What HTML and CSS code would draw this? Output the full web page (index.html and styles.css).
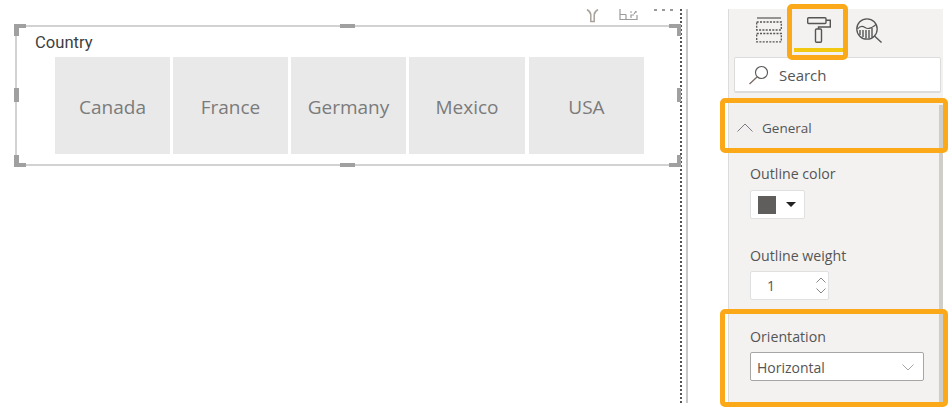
FILE: index.html
```html
<!DOCTYPE html>
<html lang="en">
<head>
<meta charset="utf-8">
<title>Slicer format</title>
<link rel="stylesheet" href="styles.css">
</head>
<body>
<div class="app">
  <main class="canvas">
    <div class="visual-tools">
      <svg class="tool" width="14" height="14" viewBox="0 0 14 14"><path d="M1 0.5 Q5 3 4.8 6 V12.5 H8.2 V6 Q8 3 12 0.5" fill="none" stroke="#a8a29a" stroke-width="1.5"/></svg>
      <svg class="tool tool-focus" width="19" height="14" viewBox="0 0 19 14"><path d="M1 0 V10.5 H18 V6 M1 5.5 H7 M7 5.5 V10 M11 3 H13 M16 3 H18 M12 9 V6 H15 M15 5 L17 2" fill="none" stroke="#9a9a9a" stroke-width="1.2"/></svg>
      <span class="dots"><i></i><i></i><i></i></span>
    </div>
    <section class="visual">
      <span class="handle tl-a"></span><span class="handle tl-b"></span>
      <span class="handle bl-a"></span><span class="handle bl-b"></span>
      <span class="handle tr-a"></span><span class="handle tr-b"></span>
      <span class="handle br-a"></span><span class="handle br-b"></span>
      <span class="handle top"></span><span class="handle bottom"></span>
      <span class="handle left"></span><span class="handle right"></span>
      <h2 class="visual-title">Country</h2>
      <div class="tiles">
        <div class="tile t1">Canada</div>
        <div class="tile t2">France</div>
        <div class="tile t3">Germany</div>
        <div class="tile t4">Mexico</div>
        <div class="tile t5">USA</div>
      </div>
    </section>
  </main>
  <div class="divider"></div>
  <aside class="panel">
    <div class="tabs">
      <svg class="tab-icon" width="26" height="26" viewBox="0 0 26 26"><path d="M1 1 H25" fill="none" stroke="#555" stroke-width="1.2"/><path d="M0.7 5 H25.3 V13 H0.7 Z M0.7 16.5 H25.3 V24.8 H0.7 Z" fill="none" stroke="#555" stroke-width="1.3" stroke-dasharray="2 1.3"/></svg>
      <div class="tab active">
        <svg width="24" height="26" viewBox="0 0 24 26"><path d="M1.7 0.7 H18 Q19 0.7 19 1.7 V5.5 Q19 6.5 18 6.5 H1.7 Q0.7 6.5 0.7 5.5 V1.7 Q0.7 0.7 1.7 0.7 Z M19 3.2 H23.3 V10 H11.5 V12" fill="none" stroke="#555" stroke-width="1.4"/><rect x="8.5" y="12" width="6" height="13.3" rx="1" fill="none" stroke="#555" stroke-width="1.4"/></svg>
      </div>
      <svg class="tab-icon analytics" width="26" height="25" viewBox="0 0 26 25"><circle cx="11" cy="11" r="10.2" fill="none" stroke="#555" stroke-width="1.3"/><path d="M1.5 11 Q5 6.5 9 9.5 T20 6.5" fill="none" stroke="#555" stroke-width="1.2"/><path d="M4 12 V17 M7 12 V19 M10 12 V20.5 M13 12 V20 M16 10 V19" stroke="#555" stroke-width="1.4"/><path d="M18.5 18 L25.5 24.5" stroke="#555" stroke-width="1.4"/></svg>
    </div>
    <div class="search">
      <svg width="21" height="21" viewBox="0 0 21 21"><circle cx="13.5" cy="8.5" r="6" fill="none" stroke="#555" stroke-width="1.1"/><path d="M9 13 L1.5 20" stroke="#7a6a66" stroke-width="1.3"/></svg>
      <span class="search-text">Search</span>
    </div>
    <div class="body">
      <div class="section-head">
        <svg width="16" height="9" viewBox="0 0 16 9"><path d="M0.5 8.5 L8 1 L15.5 8.5" fill="none" stroke="#7d7a86" stroke-width="1"/></svg>
        <span>General</span>
      </div>
      <label class="lbl lbl-color">Outline color</label>
      <div class="color-btn"><span class="swatch"></span><span class="caret"></span></div>
      <label class="lbl lbl-weight">Outline weight</label>
      <div class="spin">
        <span class="spin-val">1</span>
        <span class="arrows">
          <svg width="10" height="6" viewBox="0 0 10 6"><path d="M0.5 5.5 L5 1 L9.5 5.5" fill="none" stroke="#8a8886"/></svg>
          <svg width="10" height="6" viewBox="0 0 10 6"><path d="M0.5 0.5 L5 5 L9.5 0.5" fill="none" stroke="#8a8886"/></svg>
        </span>
      </div>
      <label class="lbl lbl-orient">Orientation</label>
      <div class="select">
        <span>Horizontal</span>
        <svg width="12" height="7" viewBox="0 0 12 7"><path d="M0.5 0.5 L6 6 L11.5 0.5" fill="none" stroke="#a6a6a6"/></svg>
      </div>
    </div>
    <span class="mark mark-tab"></span>
    <span class="underline"></span>
    <span class="mark mark-general"></span>
    <span class="mark mark-orient"></span>
  </aside>
</div>
</body>
</html>
```
FILE: styles.css
```css
* { box-sizing: border-box; }
html, body { margin: 0; padding: 0; background: #fff; overflow: hidden; }
body { font-family: "Open Sans", "Noto Sans", sans-serif; color: #444; }
.app { width: 951px; height: 413px; display: flex; position: relative; }

.canvas { width: 680px; padding: 9px 0 0 15px; flex: none; }
.visual-tools { height: 16px; display: flex; justify-content: flex-end; align-items: flex-start; overflow: hidden; padding-right: 7px; }
.tool { display: block; }
.tool-focus { margin-left: 19px; margin-right: 16px; }
.dots { display: flex; gap: 5px; }
.dots i { width: 3px; height: 2px; background: #9a9a9a; display: block; }

.visual { position: relative; height: 141px; border: 2px solid #d2d2d2; border-right: 0; padding: 7px 0 0 18px; }
.visual-title { margin: 0; font: 400 16.6px/18px Roboto, sans-serif; color: #3f3f3f; }
.tiles { display: flex; margin: 5px 0 0 20px; }
.tile { height: 97px; padding-top: 2px; background: #e9e9e9; display: flex; align-items: center; justify-content: center; font-size: 19px; color: #7b7b7b; width: 115px; margin-right: 3px; }
.t4 { width: 116px; margin-right: 4px; }
.t5 { margin-right: 0; }

.handle { position: absolute; background: #a0a0a0; }
.tl-a { left: -3px; top: -3px; width: 12px; height: 4px; }
.tl-b { left: -3px; top: -3px; width: 5px; height: 12px; }
.bl-a { left: -3px; bottom: -3px; width: 12px; height: 4px; }
.bl-b { left: -3px; bottom: -3px; width: 5px; height: 12px; }
.tr-a { right: -1px; top: -3px; width: 12px; height: 4px; }
.tr-b { right: -1px; top: -3px; width: 4px; height: 12px; }
.br-a { right: -1px; bottom: -3px; width: 12px; height: 4px; }
.br-b { right: -1px; bottom: -3px; width: 4px; height: 12px; }
.top { left: 323px; top: -3px; width: 15px; height: 4px; }
.bottom { left: 323px; bottom: -3px; width: 15px; height: 4px; }
.left { left: -3px; top: 61px; width: 5px; height: 14px; }
.right { right: -1px; top: 61px; width: 4px; height: 14px; }

.divider { width: 8px; flex: none; margin-top: 9px; height: 394px; border-left: 2px dotted #555; border-right: 2px solid #c8c8c8; margin-right: 40px; }

.panel { width: 215px; flex: none; margin-top: 9px; height: 396px; background: #f3f2f1; border-left: 1px solid #dcdcdc; }
.tabs { height: 47px; display: flex; align-items: flex-start; padding-left: 27px; }
.tab-icon { display: block; margin-top: 8px; }
.tab { width: 59px; margin-left: 6px; padding: 8px 0 0 19px; }
.tab svg { display: block; }
.analytics { margin-left: 9px; margin-top: 9px; }
.search { margin: 1px 0 0 5px; width: 207px; height: 36px; background: #fff; border: 1px solid #dcdcdc; border-bottom-width: 2px; border-radius: 2px; display: flex; align-items: center; padding-left: 13px; gap: 10px; font-size: 15px; color: #555; }
.search svg { display: block; }
.search-text { padding-top: 1px; }

.body { margin-top: 12px; height: 300px; border-right: 4px solid #d0cec9; }
.section-head { height: 45px; display: flex; align-items: center; gap: 9px; padding-left: 8px; font-size: 13.5px; color: #555; background: #f1f0ef; }
.section-head svg { display: block; }
.lbl { display: block; font-size: 14.2px; line-height: 18px; color: #555; margin-left: 21px; }
.lbl-color { margin-top: 15px; }
.color-btn { margin: 7px 0 0 21px; width: 55px; height: 29px; background: #fff; border: 1px solid #e0e0e0; border-radius: 2px; display: flex; align-items: center; padding-left: 7px; gap: 10px; }
.swatch { width: 18px; height: 18px; background: #605e5c; display: block; }
.caret { width: 0; height: 0; border: 5px solid transparent; border-top: 5px solid #222; border-bottom: 0; display: block; }
.lbl-weight { margin-top: 28px; }
.spin { margin: 6px 0 0 21px; width: 79px; height: 29px; background: #fff; border: 1px solid #e0e0e0; border-radius: 2px; display: flex; align-items: center; justify-content: space-between; padding: 0 2px 0 16px; font-size: 14px; color: #555; }
.arrows { display: flex; flex-direction: column; gap: 5px; }
.arrows svg { display: block; }
.lbl-orient { margin-top: 28px; }
.select { margin: 6px 0 0 21px; width: 174px; height: 29px; background: #fff; border: 1px solid #a8a6a4; border-radius: 2px; display: flex; align-items: center; justify-content: space-between; padding: 1px 9px 0 6px; font-size: 14px; color: #555; }
.select svg { display: block; }

.mark { position: absolute; border: 5px solid #fca919; border-radius: 5px; }
.mark-tab { left: 787px; top: 4px; width: 61px; height: 56px; }
.mark-general { left: 720px; top: 98px; width: 228px; height: 55px; }
.mark-orient { left: 720px; top: 309px; width: 228px; height: 98px; }
.underline { position: absolute; left: 794px; top: 48px; width: 49px; height: 4px; background: #f2c811; }
```
